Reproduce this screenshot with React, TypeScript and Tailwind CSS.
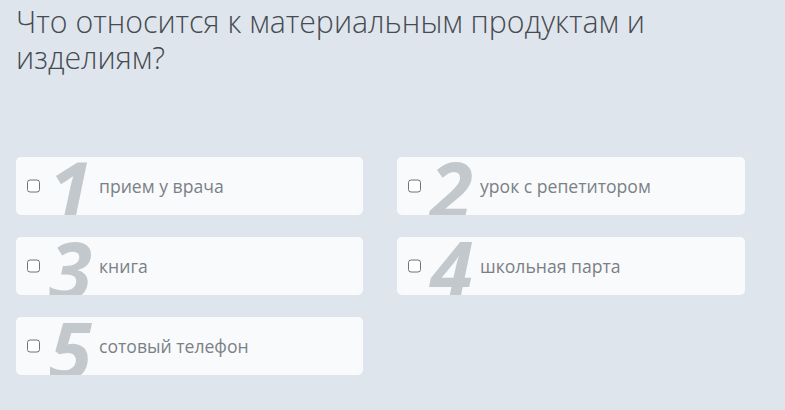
import React from "react";

const items = [
  { n: "1", t: "прием у врача" },
  { n: "2", t: "урок с репетитором" },
  { n: "3", t: "книга" },
  { n: "4", t: "школьная парта" },
  { n: "5", t: "сотовый телефон" },
];

export default function App() {
  return (
    <div
      className="w-[785px] h-[410px] bg-[#dfe5ec] overflow-hidden"
      style={{ fontFamily: '"Open Sans", "Noto Sans", sans-serif' }}
    >
      <h1 className="pl-4 pr-6 pt-[4px] text-[30.3px] leading-[36px] font-light text-[#464b51]">
        Что относится к материальным продуктам и изделиям?
      </h1>
      <div className="ml-4 mt-[81px] grid grid-cols-[347px_348px] gap-x-[34px] gap-y-[22px]">
        {items.map((it) => (
          <label
            key={it.n}
            className="relative h-[58px] rounded-[5px] bg-[#f9fafb] flex items-center overflow-hidden"
          >
            <span className="absolute left-[11px] top-1/2 -translate-y-1/2 w-[13px] h-[13px] rounded-[3px] border border-[#6f7378] bg-white" />
            <span className="absolute left-[33px] top-[-10px] text-[78px] leading-[84px] font-bold italic text-[#c3c8cd] select-none">
              {it.n}
            </span>
            <span className="relative pl-[83px] text-[17.6px] text-[#7b8087]">{it.t}</span>
          </label>
        ))}
      </div>
    </div>
  );
}
